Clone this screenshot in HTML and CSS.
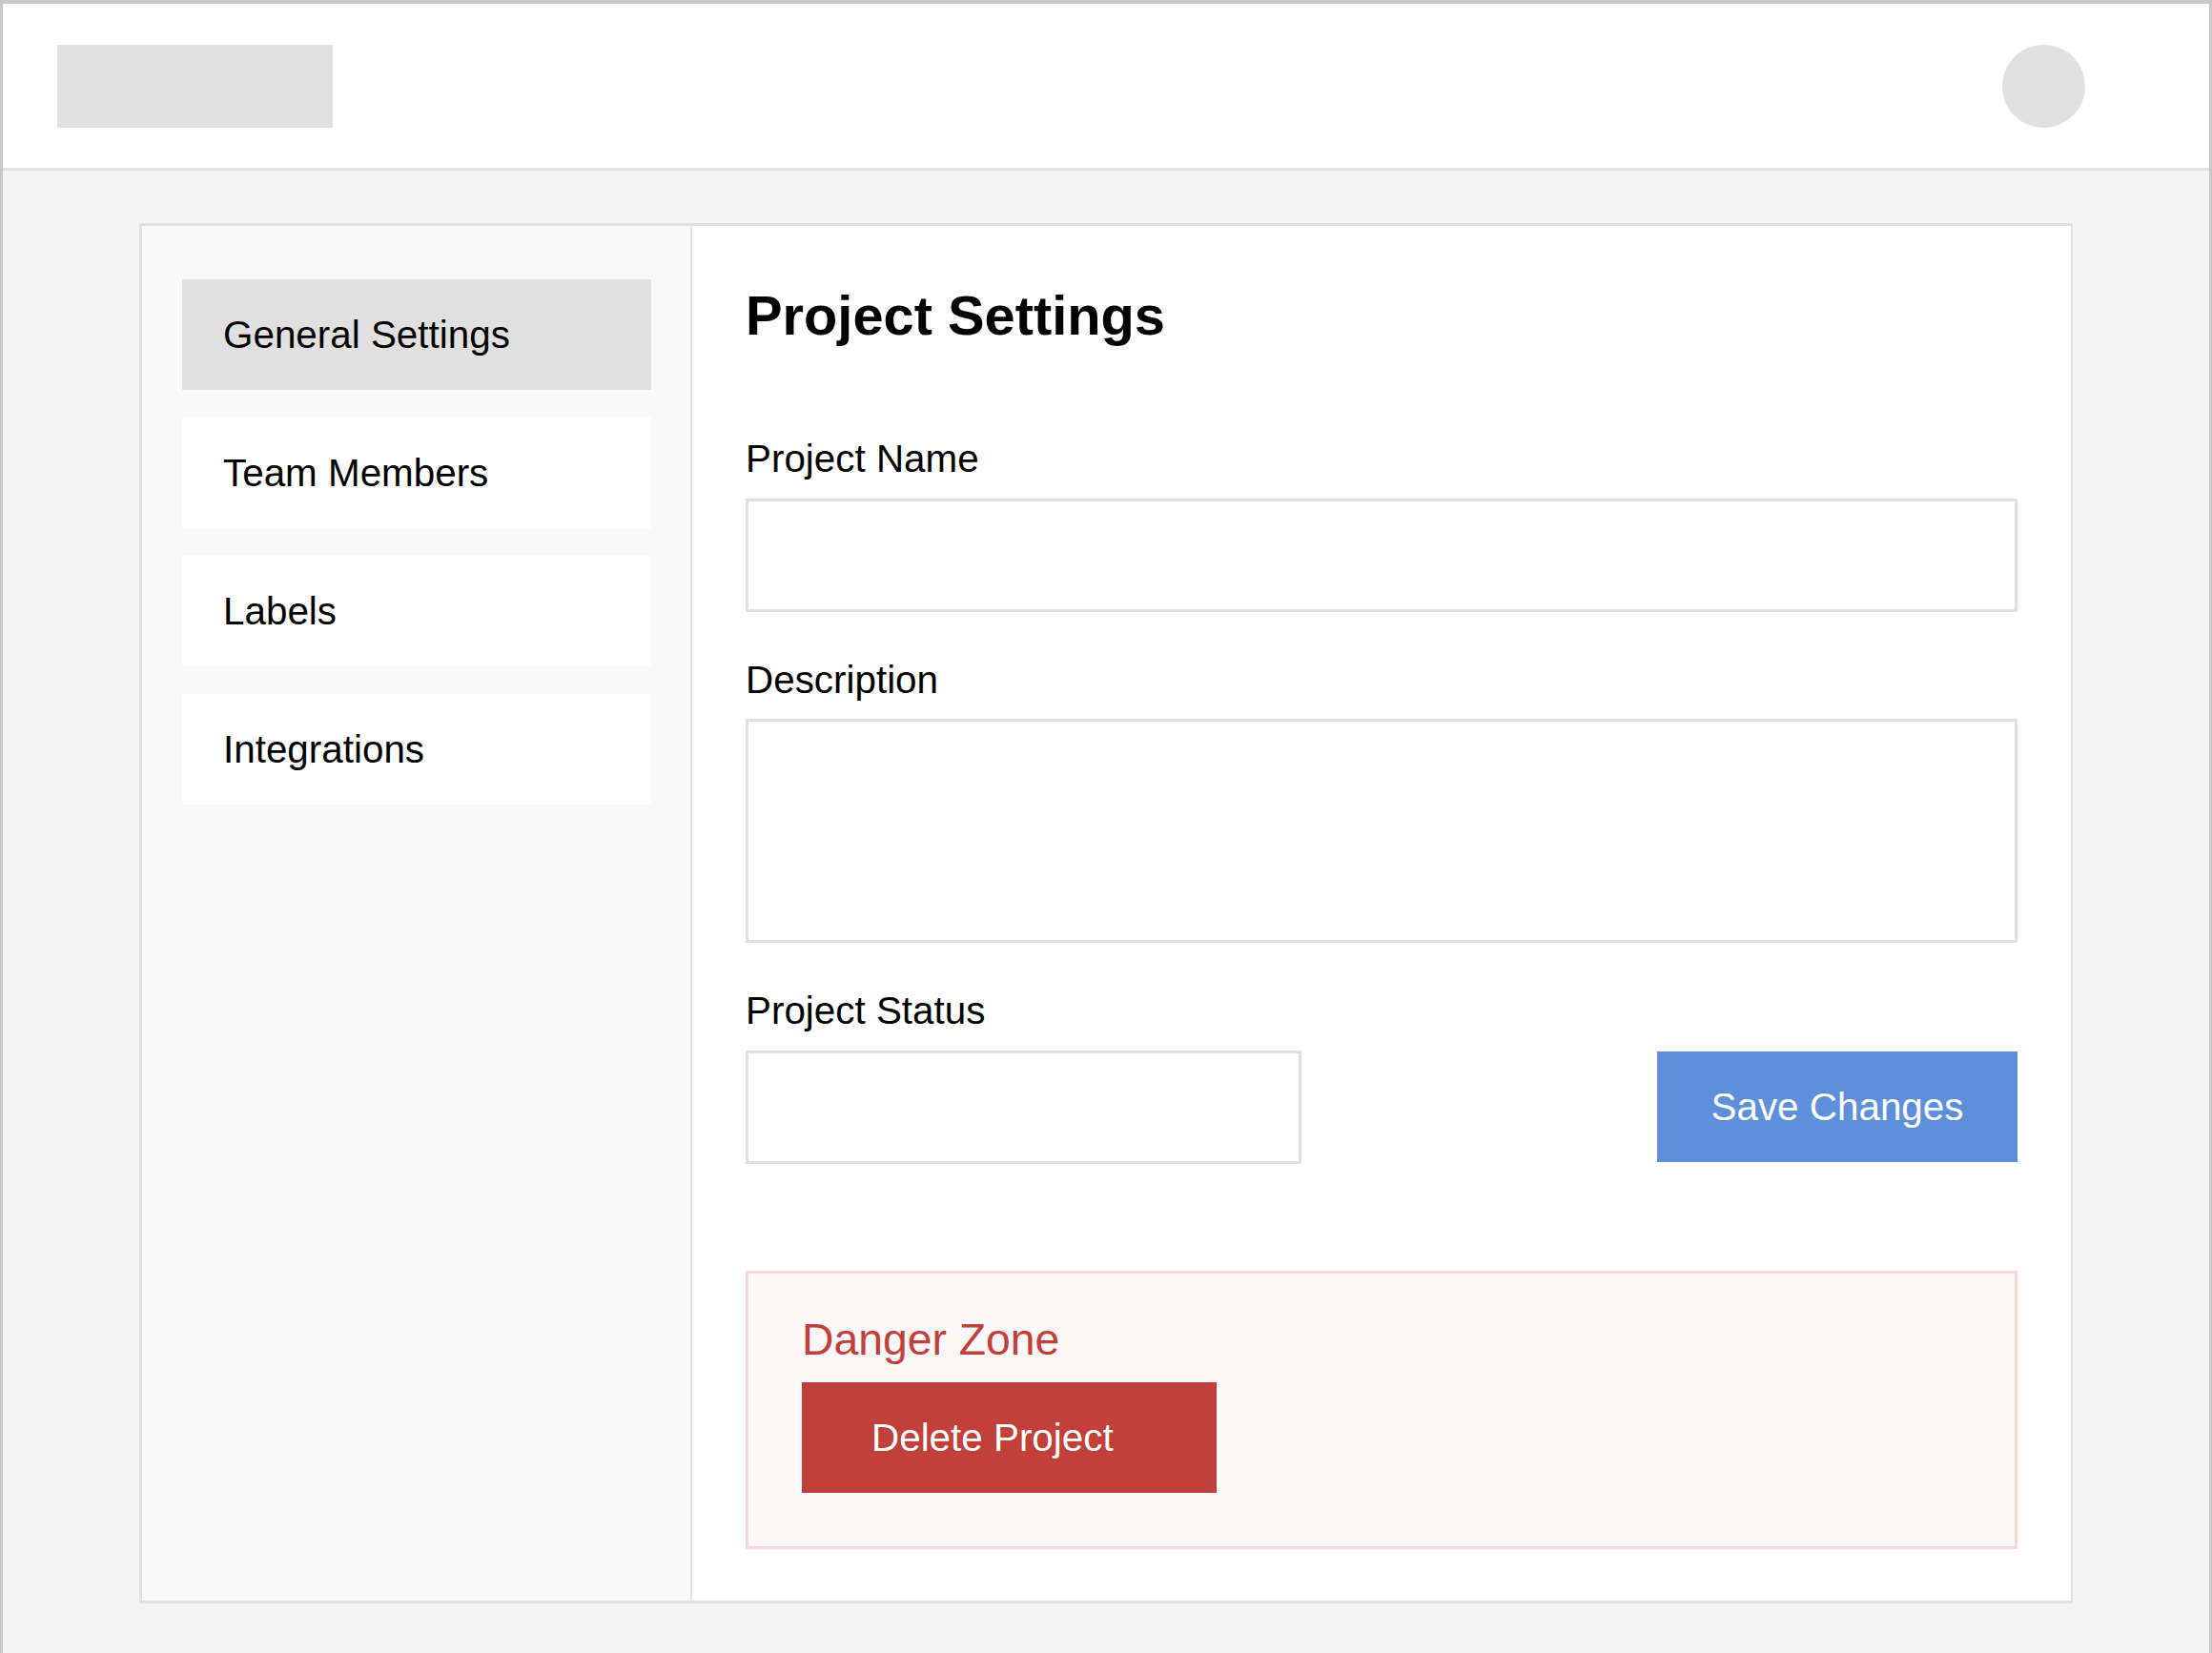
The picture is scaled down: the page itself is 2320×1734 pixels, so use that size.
FILE: index.html
```html
<!DOCTYPE html>
<html lang="en">
<head>
<meta charset="utf-8">
<title>Project Settings</title>
<link rel="stylesheet" href="styles.css">
</head>
<body>
<div class="frame">
  <header class="header">
    <div class="logo"></div>
    <div class="avatar"></div>
  </header>
  <div class="content">
    <div class="card">
      <nav class="sidebar">
        <div class="nav-item active">General Settings</div>
        <div class="nav-item">Team Members</div>
        <div class="nav-item">Labels</div>
        <div class="nav-item">Integrations</div>
      </nav>
      <main class="main">
        <h1 class="title">Project Settings</h1>
        <div class="field">
          <label class="label" for="pname">Project Name</label>
          <input class="input" id="pname" type="text">
        </div>
        <div class="field">
          <label class="label" for="pdesc">Description</label>
          <textarea class="input textarea" id="pdesc"></textarea>
        </div>
        <div class="status-row">
          <div class="status-field">
            <label class="label" for="pstatus">Project Status</label>
            <input class="input" id="pstatus" type="text">
          </div>
          <button class="btn btn-save" type="button">Save Changes</button>
        </div>
        <section class="danger">
          <h3 class="danger-title">Danger Zone</h3>
          <button class="btn btn-delete" type="button">Delete Project</button>
        </section>
      </main>
    </div>
  </div>
</div>
</body>
</html>
```

FILE: styles.css
```css
* { box-sizing: border-box; }

html, body {
  margin: 0;
  padding: 0;
  background: #f4f4f4;
}

body {
  font-family: "Liberation Sans", Arial, Helvetica, sans-serif;
  color: #000;
}

.frame {
  min-height: 1734px;
  border-top: 4px solid #c8c8c8;
  border-left: 3px solid #c8c8c8;
  border-right: 3px solid #c8c8c8;
  background: #f4f4f4;
  display: flex;
  flex-direction: column;
}

.header {
  height: 175px;
  background: #fff;
  border-bottom: 3px solid #e0e0e0;
  display: flex;
  align-items: center;
  justify-content: space-between;
  padding: 0 130px 0 57px;
}

.logo {
  width: 289px;
  height: 87px;
  background: #e0e0e0;
}

.avatar {
  width: 87px;
  height: 87px;
  border-radius: 50%;
  background: #e0e0e0;
}

.content {
  flex: 1;
  padding: 55px 143px 52px 143px;
}

.card {
  display: flex;
  border: 3px solid #e0e0e0;
  border-right-width: 2px;
  background: #fff;
}

.sidebar {
  width: 577px;
  flex: none;
  background: #f9f9f9;
  border-right: 2px solid #e4e4e4;
  padding: 56px 41px 0 42px;
  display: flex;
  flex-direction: column;
  gap: 29px;
}

.nav-item {
  height: 116px;
  background: #fff;
  font-size: 40.4px;
  line-height: 46px;
  padding: 35px 43px;
  white-space: nowrap;
}

.nav-item.active {
  background: #e0e0e0;
}

.main {
  flex: 1;
  padding: 61px 56px 54px 56px;
  display: flex;
  flex-direction: column;
}

.title {
  margin: 0 0 94px;
  font-size: 57.8px;
  line-height: 66px;
  font-weight: bold;
}

.field {
  display: flex;
  flex-direction: column;
  margin-bottom: 48px;
}

.label {
  display: block;
  font-size: 40.4px;
  line-height: 46px;
  margin-bottom: 19px;
}

.field + .field .label {
  margin-bottom: 18px;
}

.input {
  display: block;
  width: 100%;
  height: 119px;
  margin: 0;
  padding: 0 20px;
  border: 3px solid #e0e0e0;
  border-radius: 0;
  background: #fff;
  font: inherit;
  font-size: 40px;
  outline: none;
  -webkit-appearance: none;
  appearance: none;
}

.textarea {
  height: 235px;
  resize: none;
}

.status-row {
  display: flex;
  justify-content: space-between;
  align-items: flex-end;
}

.status-field {
  width: 583px;
  display: flex;
  flex-direction: column;
}

.btn {
  border: 0;
  border-radius: 0;
  margin: 0;
  height: 116px;
  font-family: inherit;
  font-size: 40.4px;
  line-height: 46px;
  color: #fff;
  cursor: pointer;
  -webkit-appearance: none;
  appearance: none;
}

.btn-save {
  width: 378px;
  background: #5d8fdb;
  margin-bottom: 2px;
  padding: 0;
  text-align: center;
}

.danger {
  margin-top: 112px;
  border: 3px solid #f8d5d9;
  background: #fdf7f7;
  padding: 43px 56px 56px 56px;
}

.danger-title {
  margin: 0 0 18px;
  font-size: 46.3px;
  line-height: 53px;
  font-weight: normal;
  color: #c1403a;
}

.btn-delete {
  display: block;
  width: 435px;
  background: #c1403a;
  padding: 0 0 0 73px;
  text-align: left;
}
```
